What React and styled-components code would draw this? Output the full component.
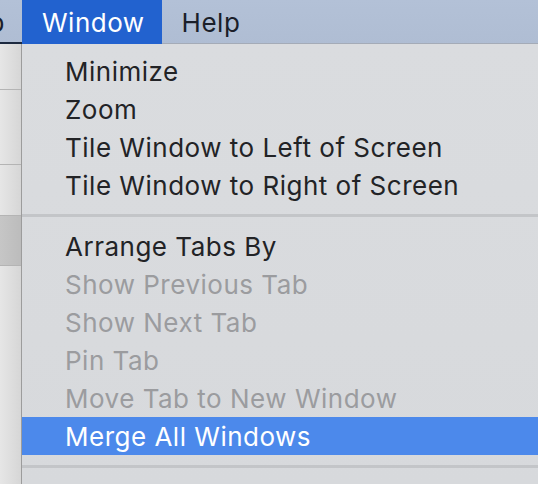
import React from 'react'
import styled, { createGlobalStyle } from 'styled-components'

const Global = createGlobalStyle`
  html, body {
    margin: 0;
    padding: 0;
    background: #d9dbde;
  }
  body {
    font-family: Inter, "Noto Sans", "Liberation Sans", sans-serif;
    -webkit-font-smoothing: antialiased;
  }
`

const topItems = [
  { label: 'Minimize' },
  { label: 'Zoom' },
  { label: 'Tile Window to Left of Screen' },
  { label: 'Tile Window to Right of Screen' },
]

const tabItems = [
  { label: 'Arrange Tabs By' },
  { label: 'Show Previous Tab', disabled: true },
  { label: 'Show Next Tab', disabled: true },
  { label: 'Pin Tab', disabled: true },
  { label: 'Move Tab to New Window', disabled: true },
  { label: 'Merge All Windows', active: true },
]

const App = () => (
  <Screen>
    <Global />
    <MenuBar>
      <Clipped>
        <Title>Develop</Title>
      </Clipped>
      <Title active>Window</Title>
      <Title>Help</Title>
      <BarRest />
    </MenuBar>
    <Body>
      <Strip>
        <StripRow h={46} />
        <StripRow h={75} />
        <StripRow h={51} />
        <StripRow h={50} dark />
        <StripFill />
      </Strip>
      <Menu>
        {topItems.map((it) => (
          <Item key={it.label}>{it.label}</Item>
        ))}
        <Separator />
        {tabItems.map((it) => (
          <Item key={it.label} disabled={it.disabled} active={it.active}>
            {it.label}
          </Item>
        ))}
        <Separator />
      </Menu>
    </Body>
  </Screen>
)

const Screen = styled.div`
  width: 538px;
  height: 484px;
  overflow: hidden;
  display: flex;
  flex-direction: column;
`
const MenuBar = styled.div`
  height: 44px;
  flex: none;
  display: flex;
  background: linear-gradient(#b3c1d7, #afbdd3);
  box-shadow: inset 0 -1px 0 #a4abb7;
`
const Clipped = styled.div`
  width: 22px;
  flex: none;
  overflow: hidden;
  display: flex;
  justify-content: flex-end;
  box-shadow: inset 0 -2px 0 #1d2a40;
`
const Title = styled.div`
  flex: none;
  height: 44px;
  display: flex;
  align-items: center;
  padding: 0 17px 0 20px;
  font-size: 26px;
  letter-spacing: 0.5px;
  color: ${(p) => (p.active ? '#ffffff' : '#1b1f2a')};
  background: ${(p) => (p.active ? '#2262cf' : 'transparent')};
  white-space: nowrap;
`
const BarRest = styled.div`
  flex: 1;
`
const Body = styled.div`
  flex: 1;
  display: flex;
  min-height: 0;
`
const Strip = styled.div`
  width: 21px;
  flex: none;
  display: flex;
  flex-direction: column;
  border-right: 1px solid #9c9c9c;
  background: linear-gradient(90deg, #e6e6e6, #d6d6d6);
`
const StripRow = styled.div`
  height: ${(p) => p.h}px;
  flex: none;
  box-sizing: border-box;
  border-bottom: 1px solid #b4b4b4;
  background: ${(p) => (p.dark ? 'linear-gradient(90deg, #c6c6c6, #bcbcbc)' : 'transparent')};
`
const StripFill = styled.div`
  flex: 1;
`
const Menu = styled.div`
  flex: 1;
  padding-top: 8px;
  background: linear-gradient(180deg, #dadcdf, #d7d9dc);
`
const Item = styled.div`
  height: 38px;
  display: flex;
  align-items: center;
  padding-left: 43px;
  font-size: 26px;
  letter-spacing: 0.5px;
  white-space: nowrap;
  color: ${(p) => (p.active ? '#ffffff' : p.disabled ? '#9b9c9f' : '#222326')};
  background: ${(p) => (p.active ? '#4c89eb' : 'transparent')};
`
const Separator = styled.div`
  height: 23px;
  display: flex;
  align-items: center;
  &::after {
    content: '';
    flex: 1;
    height: 3px;
    background: #c3c5c8;
  }
`

export default App
